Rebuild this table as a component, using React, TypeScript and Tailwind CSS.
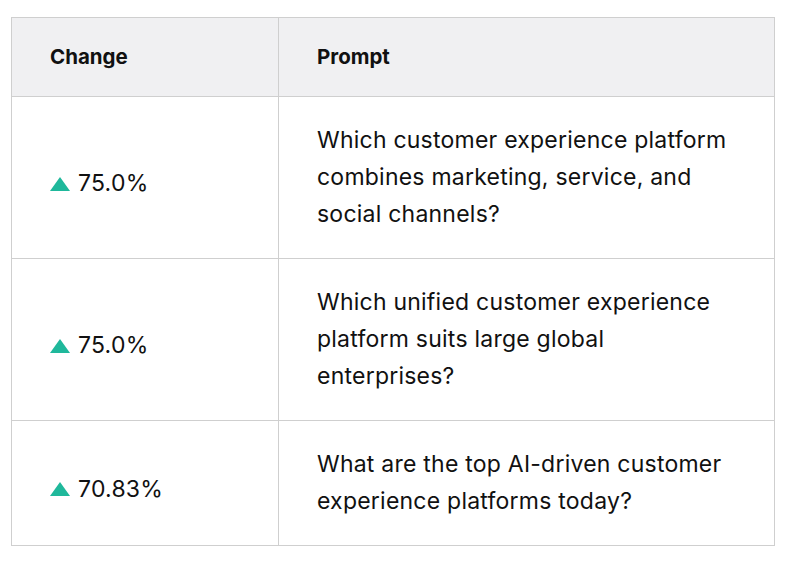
const rows = [
  { change: "75.0%", prompt: "Which customer experience platform combines marketing, service, and social channels?" },
  { change: "75.0%", prompt: "Which unified customer experience platform suits large global enterprises?" },
  { change: "70.83%", prompt: "What are the top AI-driven customer experience platforms today?" },
]

function UpTriangle() {
  return (
    <svg width="20" height="14" viewBox="0 0 20 14" className="shrink-0">
      <polygon points="10,0 20,14 0,14" fill="#1fb89b" />
    </svg>
  )
}

export default function App() {
  return (
    <div className="min-h-screen bg-white pt-[17px] pl-[11px]" style={{ fontFamily: "Inter, 'Liberation Sans', sans-serif" }}>
      <table className="border-collapse text-[#111]">
        <thead>
          <tr className="bg-[#f0f0f2]">
            <th className="w-[267px] h-[79px] border border-[#cfcfcf] pl-[38px] text-left text-[20.5px] font-bold">Change</th>
            <th className="w-[496px] h-[79px] border border-[#cfcfcf] pl-[38px] text-left text-[20.5px] font-bold">Prompt</th>
          </tr>
        </thead>
        <tbody>
          {rows.map((row, i) => (
            <tr key={i}>
              <td className="border border-[#cfcfcf] pl-[38px] pt-[12px] align-middle">
                <div className="flex items-center gap-2 text-[23px] tracking-[0.01em]">
                  <UpTriangle />
                  <span>{row.change}</span>
                </div>
              </td>
              <td className="border border-[#cfcfcf] pl-[38px] pr-[36px] py-[25px] text-[23px] tracking-[0.01em] leading-[37px]">
                {row.prompt}
              </td>
            </tr>
          ))}
        </tbody>
      </table>
    </div>
  )
}
